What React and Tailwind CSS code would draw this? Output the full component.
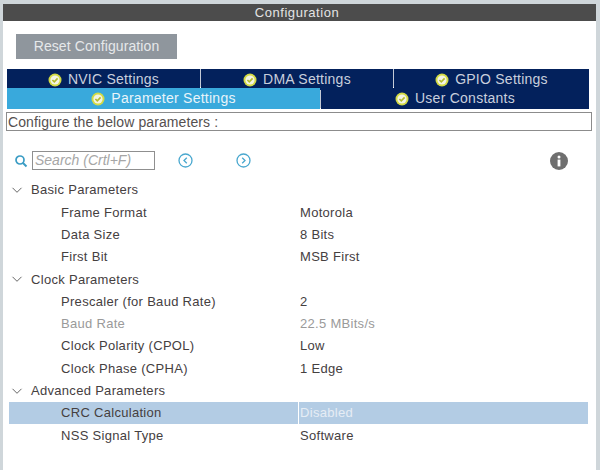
const sections = [
  {
    title: 'Basic Parameters',
    rows: [
      { name: 'Frame Format', value: 'Motorola' },
      { name: 'Data Size', value: '8 Bits' },
      { name: 'First Bit', value: 'MSB First' },
    ],
  },
  {
    title: 'Clock Parameters',
    rows: [
      { name: 'Prescaler (for Baud Rate)', value: '2' },
      { name: 'Baud Rate', value: '22.5 MBits/s', muted: true },
      { name: 'Clock Polarity (CPOL)', value: 'Low' },
      { name: 'Clock Phase (CPHA)', value: '1 Edge' },
    ],
  },
  {
    title: 'Advanced Parameters',
    rows: [
      { name: 'CRC Calculation', value: 'Disabled', selected: true },
      { name: 'NSS Signal Type', value: 'Software' },
    ],
  },
];

function CheckBadge() {
  return (
    <svg width="14" height="14" viewBox="0 0 14 14" className="shrink-0">
      <circle cx="7" cy="7" r="6.5" fill="#d3db45" />
      <circle cx="7" cy="7" r="4.6" fill="#f3f4e4" />
      <path d="M4.4 7 L6.3 8.9 L9.6 5.4" fill="none" stroke="#b3bb2c" strokeWidth="1.6" />
    </svg>
  );
}

function NavArrow({ dir }) {
  return (
    <svg width="15" height="15" viewBox="0 0 15 15">
      <circle cx="7.5" cy="7.5" r="6.5" fill="none" stroke="#4aa8cf" strokeWidth="1.3" />
      <path
        d={dir === 'left' ? 'M8.8 4.8 L6 7.5 L8.8 10.2' : 'M6.2 4.8 L9 7.5 L6.2 10.2'}
        fill="none"
        stroke="#4aa8cf"
        strokeWidth="1.3"
      />
    </svg>
  );
}

function Tab({ label, className }) {
  return (
    <div className={`flex items-center justify-center gap-[6px] text-[14px] tracking-[0.25px] ${className}`}>
      <CheckBadge />
      <span>{label}</span>
    </div>
  );
}

export default function App() {
  return (
    <div className="h-[470px] w-[600px] overflow-hidden bg-[#cfd6da] pl-[3px] pr-[4px] pt-[4px] font-['Liberation_Sans',sans-serif]">
      <div className="h-[466px] bg-white">
        <div className="flex h-[17px] items-center justify-center bg-[#4c4c4c] pr-[5px] text-[13px] tracking-[0.55px] text-[#e4e4e4]">
          Configuration
        </div>

        <div className="pl-[13px] pt-[13px]">
          <div className="flex h-[25px] w-[161px] items-center justify-center bg-[#8f969d] text-[14px] tracking-[0.1px] text-[#e6e8ea]">
            Reset Configuration
          </div>
        </div>

        <div className="mr-[7px] ml-[4px] mt-[10px] text-[#c9cfdc]">
          <div className="grid h-[18px] grid-cols-[193px_192px_1fr] gap-x-px bg-[#c3cad6]">
            <Tab label="NVIC Settings" className="bg-[#03215c]" />
            <Tab label="DMA Settings" className="bg-[#03215c]" />
            <Tab label="GPIO Settings" className="bg-[#03215c]" />
          </div>
          <div className="mt-px grid h-[20px] grid-cols-[313px_1fr] gap-x-px bg-[#c3cad6]">
            <Tab label="Parameter Settings" className="bg-[#39a9dc] text-[#e8f4fa]" />
            <Tab label="User Constants" className="bg-[#03215c]" />
          </div>
        </div>

        <div className="mt-[4px] ml-[3px] mr-[4px] flex h-[19px] items-center border border-[#8c8c8c] pl-px text-[14px] leading-none tracking-[0.1px] text-[#55504f]">
          Configure the below parameters :
        </div>

        <div className="mt-[20px] flex items-center pl-[11px]">
          <svg width="14" height="14" viewBox="0 0 14 14">
            <circle cx="6" cy="6" r="4" fill="none" stroke="#3a9cc4" strokeWidth="1.7" />
            <path d="M9 9 L12.5 12.5" stroke="#3a9cc4" strokeWidth="1.9" />
          </svg>
          <div className="ml-[4px] flex h-[19px] w-[123px] items-center border border-[#8f8f8f] pl-[2px] text-[14px] italic text-[#a6a6a6]">
            Search (Crtl+F)
          </div>
          <div className="ml-[23px] flex">
            <NavArrow dir="left" />
          </div>
          <div className="ml-[43px] flex">
            <NavArrow dir="right" />
          </div>
          <svg width="18" height="18" viewBox="0 0 18 18" className="ml-[299px]">
            <circle cx="9" cy="9" r="9" fill="#6f6f6f" />
            <circle cx="9" cy="5" r="1.5" fill="#fff" />
            <rect x="7.6" y="7.6" width="2.8" height="6.8" fill="#fff" />
          </svg>
        </div>

        <div className="mt-[9px] ml-[6px] mr-[8px] text-[13px] tracking-[0.3px] text-[#45403f]">
          {sections.map((section) => (
            <div key={section.title}>
              <div className="flex h-[22.3px] items-center">
                <svg width="12" height="12" viewBox="0 0 12 12" className="ml-[2px]">
                  <path d="M1.5 3.8 L6 8.3 L10.5 3.8" fill="none" stroke="#666" strokeWidth="1" />
                </svg>
                <span className="ml-[8px]">{section.title}</span>
              </div>
              {section.rows.map((row) => (
                <div
                  key={row.name}
                  className={`grid h-[22.3px] grid-cols-[289px_1fr] items-center ${row.selected ? 'bg-[#b3cce4]' : ''} ${row.muted ? 'text-[#9a9a9a]' : ''}`}
                >
                  <span className="pl-[52px]">{row.name}</span>
                  <span className={`flex h-full items-center pl-px ${row.selected ? 'border-l border-white text-[#e6edf5]' : 'border-l border-transparent'}`}>
                    {row.value}
                  </span>
                </div>
              ))}
            </div>
          ))}
        </div>
      </div>
    </div>
  );
}
